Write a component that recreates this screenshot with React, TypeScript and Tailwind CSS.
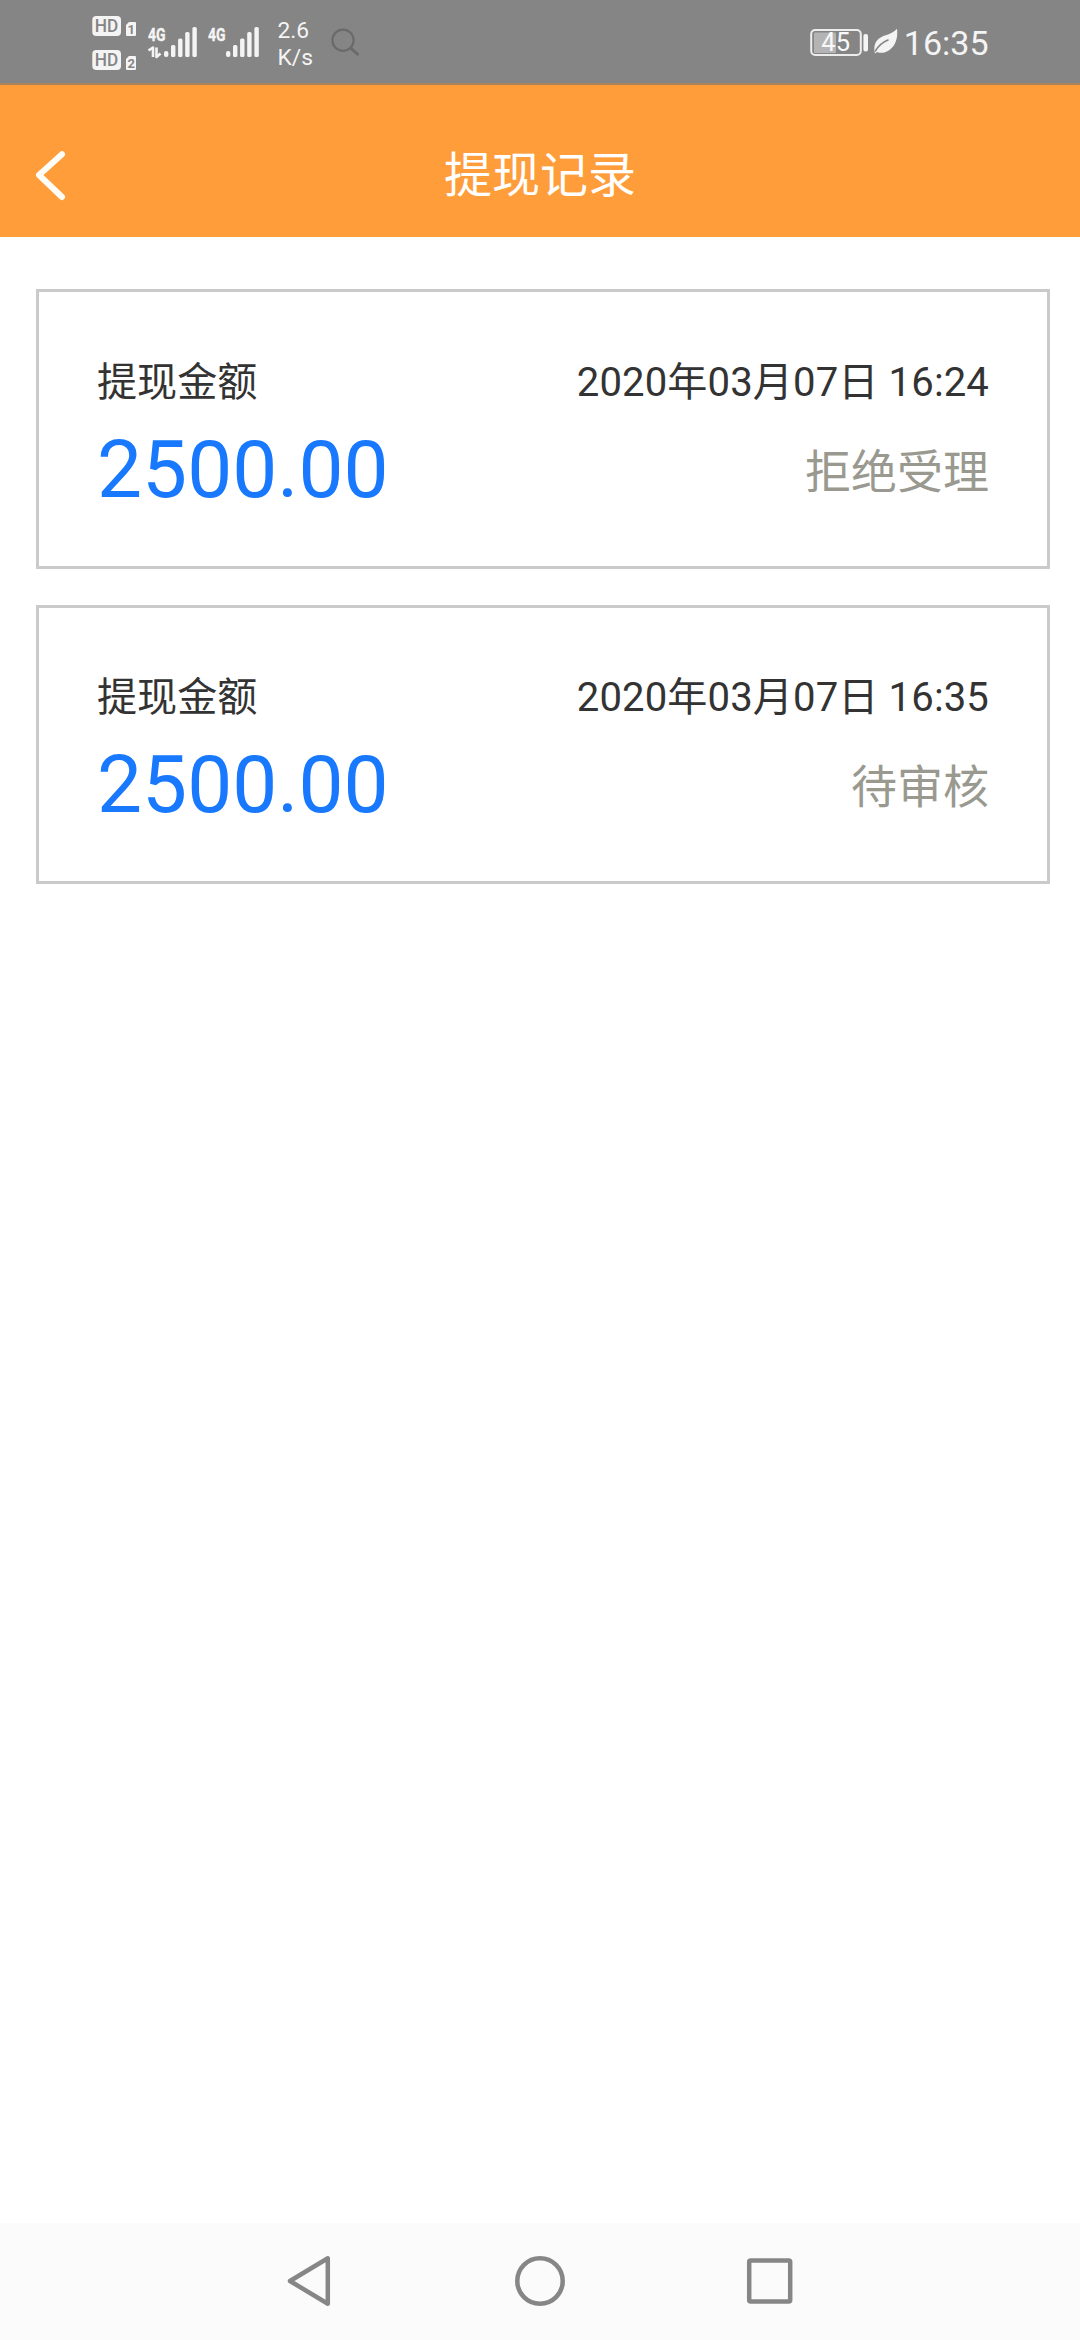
import React from "react";

type WithdrawalRecord = {
  amount: string;
  time: string;
  status: string;
};

const records: WithdrawalRecord[] = [
  { amount: "2500.00", time: "2020年03月07日 16:24", status: "拒绝受理" },
  { amount: "2500.00", time: "2020年03月07日 16:35", status: "待审核" },
];

function HdBadge({ sim }: { sim: string }) {
  return (
    <svg className="block overflow-visible" width="45" height="21" viewBox="0 0 45 21">
      <rect x="0.3" y="0" width="28.7" height="20" rx="4" fill="#f4f4f4" />
      <text x="14.6" y="16.3" textAnchor="middle" textLength="23.5" lengthAdjust="spacingAndGlyphs" fontSize="18" fontWeight="500" fill="#858585">
        HD
      </text>
      <path d="M34 9 L37 6 H43 Q44 6 44 7 V19 Q44 20 43 20 H35 Q34 20 34 19 Z" fill="#f4f4f4" />
      <text x="39.2" y="18" textAnchor="middle" fontSize="13" fontWeight="700" fill="#858585">
        {sim}
      </text>
    </svg>
  );
}

function Signal({ data = false }: { data?: boolean }) {
  const x = data ? 16 : 18;
  return (
    <svg className="block overflow-visible" width={data ? 50 : 51} height="32" viewBox={data ? "0 0 50 32" : "0 0 51 32"}>
      <text x="0" y="14.6" textLength="17.5" lengthAdjust="spacingAndGlyphs" fontSize="19" fontWeight="700" fill="#f4f4f4" stroke="#f4f4f4" strokeWidth="0.4">
        4G
      </text>
      {data && (
        <path d="M0.5 24.5 L5 21.5 V31 M8.5 21.5 V31 L12.5 27.5" fill="none" stroke="#f4f4f4" strokeWidth="2.6" strokeLinejoin="round" />
      )}
      <g fill="#f4f4f4">
        <rect x={x} y="25" width="4.4" height="6" rx="2" />
        <rect x={x + 7} y="19" width="4.4" height="12" rx="1.6" />
        <rect x={x + 14.1} y="12.5" width="4.4" height="18.5" rx="1.6" />
        <rect x={x + 21.2} y="6" width="4.4" height="25" rx="1.6" />
        <rect x={x + 28.4} y="1" width="4.4" height="30" rx="1.6" />
      </g>
    </svg>
  );
}

function StatusBar() {
  return (
    <div className="flex h-[85px] shrink-0 items-start border-b-2 border-[#a9835c] bg-[#858585] pl-[92px] pr-[91.5px] text-[#f4f4f4]">
      <div className="mt-4 flex flex-col gap-[13px]">
        <HdBadge sim="1" />
        <HdBadge sim="2" />
      </div>
      <div className="ml-[11px] mt-[26px] flex gap-[10px]">
        <Signal data />
        <Signal />
      </div>
      <div className="ml-[18.5px] mt-[17px] w-[36px] text-[22.8px] leading-[27px]">
        <div>2.6</div>
        <div>K/s</div>
      </div>
      <svg className="ml-[17px] mt-[28px] block" width="29" height="29" viewBox="0 0 29 29" fill="none" stroke="#6a6a6a" strokeWidth="2.2">
        <circle cx="12" cy="12.2" r="10.6" />
        <path d="M19.5 20 L27.5 27" strokeWidth="2.8" />
      </svg>
      <div className="ml-auto flex">
        <svg className="mt-[28px] block" width="59" height="29" viewBox="0 0 59 29">
          <rect x="1.2" y="2" width="49.6" height="25" rx="4" fill="none" stroke="#ededed" strokeWidth="2" />
          <rect x="4" y="4.5" width="22" height="20.5" rx="1" fill="#b4b4b4" />
          <text x="25.7" y="23" textAnchor="middle" fontSize="25.5" fill="#f8f8f8">
            45
          </text>
          <rect x="53.4" y="6" width="4.6" height="17.5" rx="2" fill="#f4f4f4" />
        </svg>
        <svg className="ml-[4px] mt-[28px] block" width="26" height="27" viewBox="0 0 26 27">
          <path d="M24 0.8 C25 9 23 17.5 16.5 22 C12 25 8 25.6 4 24 L2 25.6 C0.5 20 1.5 14 6 10.5 C11.5 6.5 18.5 7 24 0.8 Z" fill="#f4f4f4" />
          <path d="M2 23.5 C5.5 17.5 10 14 15.5 11.8" fill="none" stroke="#858585" strokeWidth="1.5" />
        </svg>
        <div className="ml-[5px] mt-[23px] text-[34px] leading-[40px]">16:35</div>
      </div>
    </div>
  );
}

function Header() {
  return (
    <header className="grid h-[152px] shrink-0 grid-cols-[1fr_auto_1fr] items-center bg-[#ff9d3b] pt-[28px] text-white">
      <svg className="ml-[35px] block" width="32" height="52" viewBox="0 0 32 52">
        <path d="M27 5.2 L4 26 L27 48" fill="none" stroke="#fffdf8" strokeWidth="6" strokeLinecap="round" strokeLinejoin="round" />
      </svg>
      <h1 className="pt-px text-[48px] leading-[60px]">提现记录</h1>
    </header>
  );
}

function RecordCard({ record }: { record: WithdrawalRecord }) {
  return (
    <article className="h-[280px] border-[3px] border-[#cacaca] px-[58px] pt-[61px] last:h-[279px] last:pt-[60px]">
      <div className="flex justify-between text-[40.1px] leading-[60px] text-[#333333]">
        <span>提现金额</span>
        <span className="tracking-[0.12px]">{record.time}</span>
      </div>
      <div className="flex items-center justify-between">
        <span className="text-[80.2px] leading-[114px] text-[#1879ff]">{record.amount}</span>
        <span className="pt-[3px] text-[46px] leading-[60px] text-[#999990]">{record.status}</span>
      </div>
    </article>
  );
}

function NavBar() {
  return (
    <nav className="flex h-[117px] shrink-0 items-center justify-between bg-[#fbfbfb] px-[282px] pb-px">
      <svg className="block" width="54" height="54" viewBox="0 0 54 54" fill="none" stroke="#868686" strokeWidth="4.5" strokeLinejoin="round">
        <path d="M45.8 4.3 V49.7 L8 27 Z" />
      </svg>
      <svg className="block" width="54" height="54" viewBox="0 0 54 54" fill="none" stroke="#868686" strokeWidth="4.5">
        <circle cx="27" cy="27" r="22.7" />
      </svg>
      <svg className="block" width="54" height="54" viewBox="0 0 54 54" fill="none" stroke="#868686" strokeWidth="4.5">
        <rect x="5.2" y="6.5" width="41" height="41" rx="1.5" />
      </svg>
    </nav>
  );
}

export default function App() {
  return (
    <div className="flex h-[2340px] w-[1080px] flex-col overflow-hidden bg-white font-[Roboto,'Noto_Sans_CJK_SC',sans-serif]">
      <StatusBar />
      <Header />
      <main className="flex grow flex-col gap-9 pl-9 pr-[30px] pt-[52px]">
        {records.map((record) => (
          <RecordCard key={record.time} record={record} />
        ))}
      </main>
      <NavBar />
    </div>
  );
}
